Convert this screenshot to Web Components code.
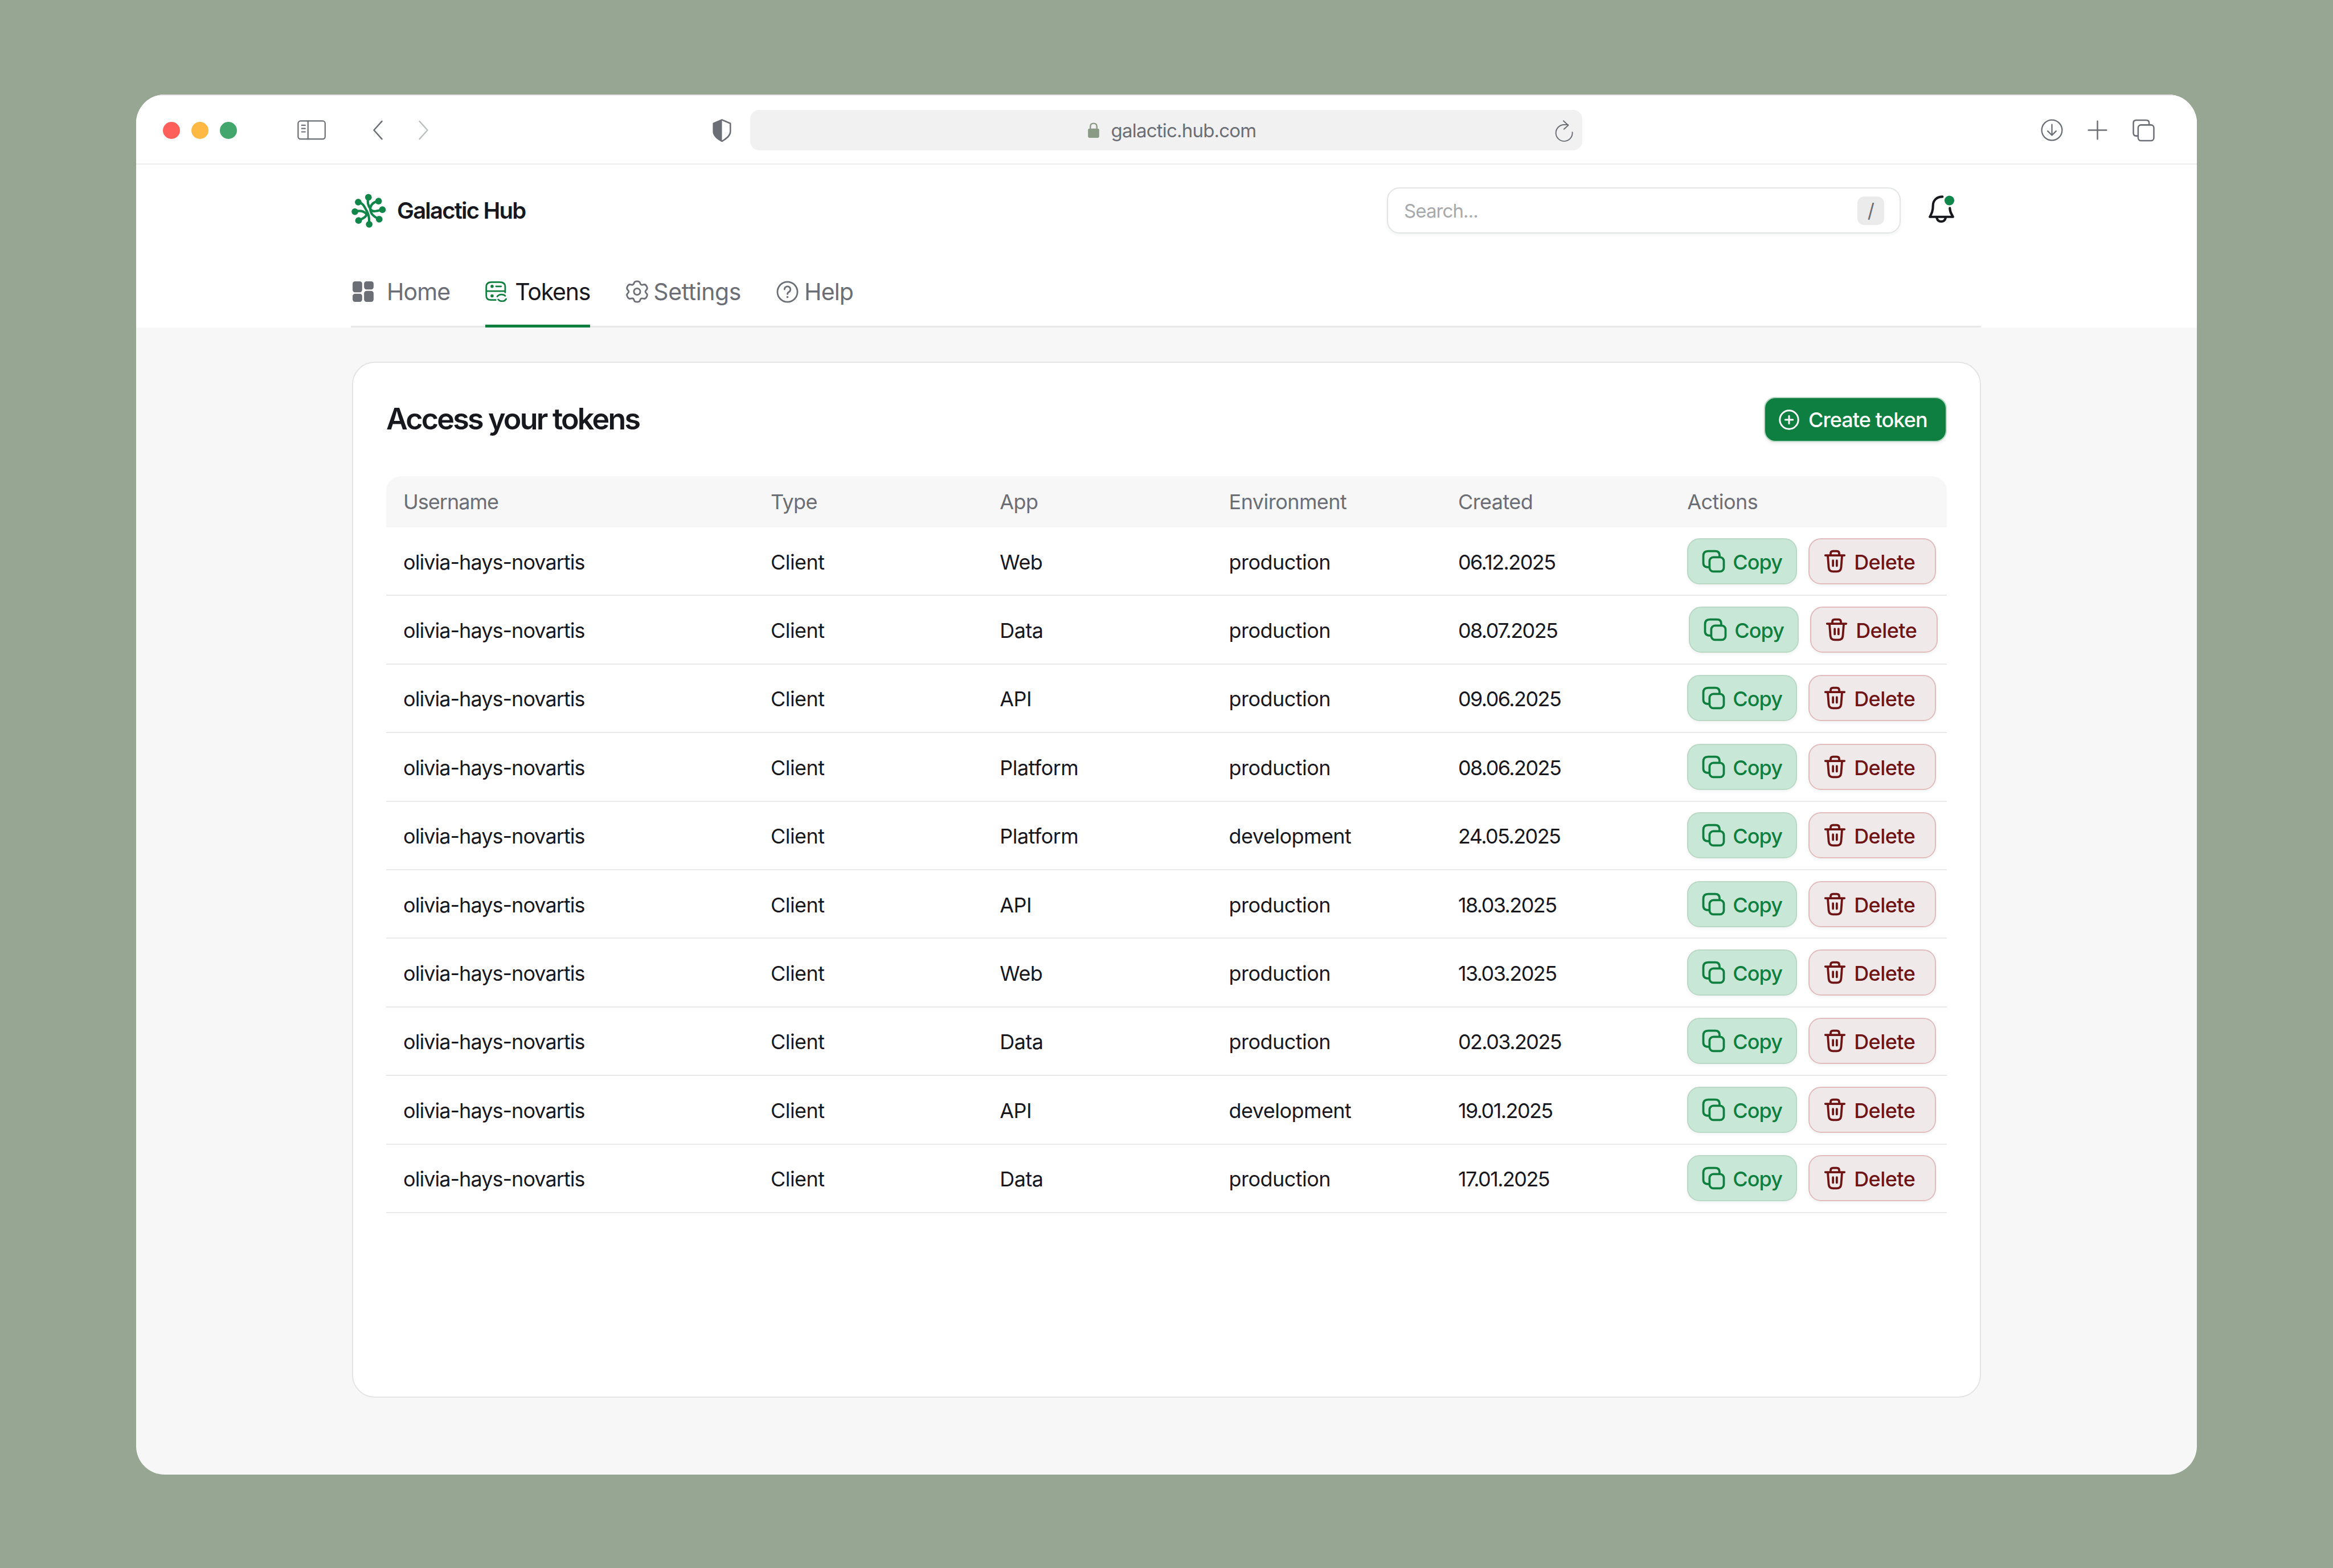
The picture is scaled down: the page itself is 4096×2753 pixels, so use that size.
<!DOCTYPE html>
<html lang="en">
<head>
<meta charset="utf-8">
<title>Galactic Hub</title>
<style>
  html, body { margin: 0; padding: 0; }
  body {
    width: 4096px;
    height: 2753px;
    overflow: hidden;
    background: #97a692;
    font-family: Inter, "Liberation Sans", sans-serif;
  }
</style>
</head>
<body>
<browser-window>
  <browser-toolbar slot="toolbar" url="galactic.hub.com"></browser-toolbar>
  <hub-header slot="header">
    <nav-tab icon="home" gap="23" style="padding-left:3px">Home</nav-tab>
    <nav-tab icon="tokens" gap="14" style="letter-spacing:-1.2px" active>Tokens</nav-tab>
    <nav-tab icon="gear" gap="8" style="letter-spacing:-0.4px">Settings</nav-tab>
    <nav-tab icon="help" gap="10">Help</nav-tab>
  </hub-header>
  <token-card heading="Access your tokens">
    <token-row head><span>Username</span><span>Type</span><span>App</span><span>Environment</span><span>Created</span><span>Actions</span></token-row>
    <token-row><span>olivia-hays-novartis</span><span>Client</span><span>Web</span><span>production</span><span>06.12.2025</span></token-row>
    <token-row shift><span>olivia-hays-novartis</span><span>Client</span><span>Data</span><span>production</span><span>08.07.2025</span></token-row>
    <token-row><span>olivia-hays-novartis</span><span>Client</span><span>API</span><span>production</span><span>09.06.2025</span></token-row>
    <token-row><span>olivia-hays-novartis</span><span>Client</span><span>Platform</span><span>production</span><span>08.06.2025</span></token-row>
    <token-row><span>olivia-hays-novartis</span><span>Client</span><span>Platform</span><span>development</span><span>24.05.2025</span></token-row>
    <token-row><span>olivia-hays-novartis</span><span>Client</span><span>API</span><span>production</span><span>18.03.2025</span></token-row>
    <token-row><span>olivia-hays-novartis</span><span>Client</span><span>Web</span><span>production</span><span>13.03.2025</span></token-row>
    <token-row><span>olivia-hays-novartis</span><span>Client</span><span>Data</span><span>production</span><span>02.03.2025</span></token-row>
    <token-row><span>olivia-hays-novartis</span><span>Client</span><span>API</span><span>development</span><span>19.01.2025</span></token-row>
    <token-row><span>olivia-hays-novartis</span><span>Client</span><span>Data</span><span>production</span><span>17.01.2025</span></token-row>
  </token-card>
</browser-window>

<script>
// icon table: viewBox, width, height, markup
const ICONS = {
  sidebar: ['70 65 185 130', 51, 36, '<g fill="none" stroke="#6b6e74" stroke-width="8" stroke-linecap="round"><rect x="75" y="70" width="172" height="115" rx="15"/><path d="M138 70V185M98 97h22M98 118h22M98 139h22"/></g>'],
  back: ['0 0 23 42', 19, 35, '<path d="M20 2 3 21l17 19" fill="none" stroke="#6b6e74" stroke-width="3" stroke-linecap="round" stroke-linejoin="round"/>'],
  forward: ['0 0 23 42', 19, 35, '<path d="M3 2l17 19L3 40" fill="none" stroke="#bcc1bf" stroke-width="3" stroke-linecap="round" stroke-linejoin="round"/>'],
  shield: ['0 0 39 47', 33, 40, '<path d="M19.5 1.5 37 9v17c0 9-9 15-17.5 20C11 41 2 35 2 26V9z" fill="none" stroke="#6b6e74" stroke-width="3" stroke-linejoin="round"/><path d="M19.5 1.5V46C11 41 2 35 2 26V9z" fill="#6b6e74"/>'],
  lock: ['0 0 24 33', 20, 27, '<rect y="13" width="24" height="20" rx="3" fill="#8b9a85"/><path d="M5 14V9q0-7 7-7t7 7v5" fill="none" stroke="#8b9a85" stroke-width="3"/>'],
  reload: ['95 90 125 140', 35, 39, '<path d="M208 170a52 52 0 1 1-53-48h26M152 98l30 28-27 24" fill="none" stroke="#6b6e74" stroke-width="7" stroke-linecap="round" stroke-linejoin="round"/>'],
  download: ['0 0 24 24', 39, 39, '<g fill="none" stroke="#6b6e74" stroke-width="1.4" stroke-linecap="round" stroke-linejoin="round"><circle cx="12" cy="12" r="11"/><path d="M12 6v11.5M7.5 13l4.5 4.5 4.5-4.5"/></g>'],
  plus: ['0 0 42 42', 35, 35, '<path d="M21 2v38M2 21h38" fill="none" stroke="#6b6e74" stroke-width="3" stroke-linecap="round"/>'],
  tabs: ['0 0 49 47', 41, 40, '<g fill="none" stroke="#6b6e74" stroke-width="3" stroke-linejoin="round"><path d="M36 11V8q0-6-6-6H9Q3 2 3 8v21q0 6 6 6h3"/><rect x="13" y="12" width="33" height="33" rx="6"/></g>'],
  logo: ['50 45 225 215', 63, 60, '<g fill="#11864a"><circle cx="160" cy="68" r="21"/><circle cx="224" cy="92" r="21"/><circle cx="248" cy="146" r="21"/><circle cx="228" cy="206" r="21"/><circle cx="165" cy="238" r="21"/><circle cx="98" cy="214" r="21"/><circle cx="75" cy="158" r="21"/><circle cx="96" cy="98" r="21"/></g><g fill="none" stroke="#11864a" stroke-width="15" stroke-linecap="round"><path d="M96 98c34 7 39 32 54 57s15 50 15 83"/><path d="M160 68c-10 32 0 57 15 77s40 7 73 1"/><path d="M224 92c-34 3-54 28-52 53 3 30 23 45 56 61"/><path d="M75 158c30-8 55-3 70 12 10 15-15 30-47 44"/></g>'],
  bell: ['80 55 170 190', 47, 53, '<path d="M168 70c-38 0-60 25-60 55 0 35-8 50-20 73h147c-13-23-20-33-20-56M132 205c8 30 48 30 56 0" fill="none" stroke="#17181e" stroke-width="15" stroke-linecap="round" stroke-linejoin="round"/><circle cx="212" cy="94" r="31" fill="#11864a"/>'],
  home: ['0 0 44 43', 37, 36, '<g fill="#6b6e74"><rect width="20" height="23" rx="5"/><rect y="26" width="20" height="17" rx="5"/><rect x="24" width="20" height="17" rx="5"/><rect x="24" y="20" width="20" height="23" rx="5"/></g>'],
  tokens: ['55 60 135 130', 38, 36, '<g fill="none" stroke="#0f7f40" stroke-width="10" stroke-linecap="round"><path d="M120 178H90q-30 0-30-28V95q0-30 35-30h50q35 0 35 30v35M60 122h120M122 92h32M130 156c10-16 40-16 50-4M186 172c-10 18-38 18-50 3"/></g><circle cx="97" cy="92" r="10" fill="#0f7f40"/><circle cx="97" cy="152" r="10" fill="#0f7f40"/>'],
  gear: ['62 40 146 150', 41, 42, '<g fill="none" stroke="#6b6e74" stroke-width="10" stroke-linejoin="round"><path d="M116 62q2-12 19-12t19 12q4 14 18 10 14-6 22 8 10 16-2 26-10 9 0 18 12 10 2 26-8 14-22 8-14-4-18 10-2 12-19 12t-19-12q-4-14-18-10-14 6-22-8-10-16 2-26 10-9 0-18-12-10-2-26 8-14 22-8 14 4 18-10z"/><circle cx="135" cy="115" r="20"/></g>'],
  help: ['0 0 24 24', 39, 39, '<g fill="none" stroke="#6b6e74" stroke-width="1.7" stroke-linecap="round"><circle cx="12" cy="12" r="10.8"/><path d="M8.8 9.3a3.2 3.2 0 1 1 4.9 2.7c-1 .6-1.7 1.2-1.7 2.4"/></g><circle cx="12" cy="17.6" r="1.1" fill="#6b6e74"/>'],
  plusCircle: ['0 0 24 24', 36, 36, '<g fill="none" stroke="#fff" stroke-width="2" stroke-linecap="round"><circle cx="12" cy="12" r="10.8"/><path d="M12 7.5v9M7.5 12h9"/></g>'],
  copy: ['0 0 49 49', 41, 41, '<g fill="none" stroke="#0f7f40" stroke-width="4.5" stroke-linecap="round"><path d="M37 15v-3q0-9-9-9H13Q3 3 3 13v15q0 9 11 9"/><rect x="16" y="16" width="30" height="30" rx="8"/></g>'],
  trash: ['0 0 44 49', 37, 41, '<g fill="none" stroke="#6f1414" stroke-width="4.5" stroke-linecap="round" stroke-linejoin="round"><path d="M2 12h40M13 11V8q0-5 5-5h8q5 0 5 5v3M7 12l2 26q1 8 9 8h8q8 0 9-8l2-26M18 23v11M26 23v11"/></g>']
};

function icon(name) {
  const [box, w, h, body] = ICONS[name];
  return `<svg viewBox="${box}" width="${w}" height="${h}" style="display:block;flex:none">${body}</svg>`;
}

class BrowserWindow extends HTMLElement {
  constructor() {
    super();
    this.attachShadow({ mode: 'open' });
    this.shadowRoot.innerHTML = `
      <style>
        :host { display: block; box-sizing: border-box; width: 3618px; height: 2423px; margin: 166px 0 0 239px; }
        .win {
          height: 100%;
          display: flex;
          flex-direction: column;
          border-radius: 50px;
          overflow: hidden;
          background: #f7f7f7;
        }
        main { flex: 1; padding: 60px 0 0 379px; }
      </style>
      <div class="win">
        <slot name="toolbar"></slot>
        <slot name="header"></slot>
        <main><slot></slot></main>
      </div>`;
  }
}

class BrowserToolbar extends HTMLElement {
  constructor() {
    super();
    this.attachShadow({ mode: 'open' });
    this.shadowRoot.innerHTML = `
      <style>
        :host { display: flex; box-sizing: border-box; height: 123px; padding: 2px 73px 0 47px; align-items: center;
          background: #fff; border-top: 2px solid #e6e6e6; border-bottom: 2px solid #eeeced; }
        .dots { display: flex; gap: 20px; }
        .dots i { width: 30px; height: 30px; border-radius: 50%; display: block; }
        .side { margin-left: 106px; }
        .back { margin-left: 81px; }
        .fwd { margin-left: 61px; }
        .shield { margin-left: 498px; }
        .url {
          margin-left: 33px;
          width: 1461px;
          height: 71px;
          background: #f1f1f1;
          border-radius: 16px;
          display: flex;
          align-items: center;
          position: relative;
          justify-content: center;
          gap: 21px;
          color: #6b6e74;
          font-size: 33px;
          letter-spacing: -0.8px;
          padding-left: 20px;
          box-sizing: border-box;
        }
        .reload { position: absolute; right: 14px; top: 17px; }
        .right { margin-left: auto; display: flex; align-items: center; gap: 43px; }
      </style>
      <div class="dots"><i style="background:#ff5f5b"></i><i style="background:#feb844"></i><i style="background:#43a76d"></i></div>
      <span class="side">${icon('sidebar')}</span>
      <span class="back">${icon('back')}</span>
      <span class="fwd">${icon('forward')}</span>
      <span class="shield">${icon('shield')}</span>
      <div class="url">${icon('lock')}<span class="host"></span><span class="reload">${icon('reload')}</span></div>
      <div class="right">${icon('download')}${icon('plus')}${icon('tabs')}</div>`;
  }
  connectedCallback() {
    this.shadowRoot.querySelector('.host').textContent = this.getAttribute('url');
  }
}

class HubHeader extends HTMLElement {
  constructor() {
    super();
    this.attachShadow({ mode: 'open' });
    this.shadowRoot.innerHTML = `
      <style>
        :host { display: block; box-sizing: border-box; height: 286px; padding: 40px 379px 0 377px; background: #fff; }
        .top { display: flex; align-items: center; height: 81px; }
        .brand { display: flex; align-items: center; gap: 18px; font-size: 40px; font-weight: 600; color: #17181e; letter-spacing: -1.8px; }
        .search {
          margin-left: auto;
          box-sizing: border-box;
          width: 902px;
          height: 81px;
          border: 2px solid #e2e5e4;
          border-radius: 22px;
          box-shadow: 0 3px 5px rgba(20, 40, 30, 0.05);
          display: flex;
          align-items: center;
          justify-content: space-between;
          padding: 0 27px 0 28px;
          font-size: 33px;
          letter-spacing: -0.9px;
          color: #a7a9ab;
        }
        .key { width: 47px; height: 50px; border-radius: 12px; background: #ebebeb; color: #6b6e74; display: flex; align-items: center; justify-content: center; font-size: 34px; }
        .bell { margin: 0 45px 0 49px; position: relative; top: -2px; }
        nav { display: flex; gap: 62px; height: 165px; box-sizing: border-box; border-bottom: 3px solid #e8e8e8; }
      </style>
      <div class="top">
        <div class="brand">${icon('logo')}<span>Galactic Hub</span></div>
        <div class="search"><span>Search...</span><span class="key">/</span></div>
        <span class="bell">${icon('bell')}</span>
      </div>
      <nav><slot></slot></nav>`;
  }
}

class NavTab extends HTMLElement {
  constructor() {
    super();
    this.attachShadow({ mode: 'open' });
  }
  connectedCallback() {
    const on = this.hasAttribute('active');
    this.shadowRoot.innerHTML = `
      <style>
        :host { display: flex; box-sizing: border-box; height: 165px; padding-top: 60px; font-size: 41px;
          letter-spacing: -0.9px; color: ${on ? '#17181e' : '#6b6e74'}; border-bottom: 5px solid ${on ? '#0f7f40' : 'transparent'}; }
        .in { display: flex; align-items: center; height: 84px; gap: ${this.getAttribute('gap')}px; }
      </style>
      <div class="in">${icon(this.getAttribute('icon'))}<slot></slot></div>`;
  }
}

class TokenCard extends HTMLElement {
  constructor() {
    super();
    this.attachShadow({ mode: 'open' });
  }
  connectedCallback() {
    this.shadowRoot.innerHTML = `
      <style>
        :host { display: block; box-sizing: border-box; width: 2860px; height: 1819px; padding: 60px 58px 0; background: #fff;
          border: 2px solid #e3e5e4; border-radius: 40px; }
        .head { display: flex; align-items: center; justify-content: space-between; height: 79px; margin-bottom: 60px; }
        h2 { margin: -3px 0 0; font-size: 52px; font-weight: 600; letter-spacing: -2.8px; color: #17181e; }
        .create {
          box-sizing: border-box;
          width: 321px;
          height: 79px;
          display: flex;
          align-items: center;
          gap: 16px;
          padding-left: 24px;
          border-radius: 20px;
          background: #0e7f40;
          border: 2px solid #b5d8c3;
          color: #fff;
          font-size: 36px;
          font-weight: 500;
          letter-spacing: -0.95px;
          box-shadow: 0 3px 5px rgba(20, 40, 30, 0.08);
        }
      </style>
      <div class="head"><h2>${this.getAttribute('heading')}</h2><div class="create">${icon('plusCircle')}<span>Create token</span></div></div>
      <slot></slot>`;
  }
}

class TokenRow extends HTMLElement {
  constructor() {
    super();
    this.attachShadow({ mode: 'open' });
  }
  connectedCallback() {
    const head = this.hasAttribute('head');
    const shift = this.hasAttribute('shift') ? 3 : 0;
    this.shadowRoot.innerHTML = `
      <style>
        :host { display: grid; box-sizing: border-box; grid-template-columns: 645px 402.3px 402.3px 402.3px 402.3px 1fr; align-items: center;
          padding-left: 30px; font-size: 36px; letter-spacing: -0.55px;
          height: ${head ? '90px' : '120.4px'};
          background: ${head ? '#f7f7f7' : '#fff'};
          color: ${head ? '#6b6e74' : '#17181e'};
          ${head ? 'border-radius: 26px 26px 0 0;' : 'border-bottom: 2px solid #e9e9e9;'} }
        ${head ? '::slotted(span:first-child) { letter-spacing: -1px; }' : `
        ::slotted(span) { padding-top: 3px; }
        ::slotted(span:first-child) { letter-spacing: -0.95px; }
        ::slotted(span:nth-child(5)) { letter-spacing: -1.6px; }`}
        .actions { display: flex; gap: 20px; margin-left: ${shift}px; }
      </style>
      <slot></slot>
      ${head ? '' : '<div class="actions"><action-button kind="copy">Copy</action-button><action-button kind="trash">Delete</action-button></div>'}`;
  }
}

class ActionButton extends HTMLElement {
  constructor() {
    super();
    this.attachShadow({ mode: 'open' });
  }
  connectedCallback() {
    const copy = this.getAttribute('kind') === 'copy';
    this.shadowRoot.innerHTML = `
      <style>
        :host { display: flex; box-sizing: border-box; align-items: center; height: 81px; border-radius: 22px; font-weight: 500;
          width: ${copy ? '193px' : '224px'}; padding-left: ${copy ? '24px' : '26px'}; gap: ${copy ? '13px' : '15px'};
          background: ${copy ? '#c9e7d6' : '#efe9e9'};
          border: 2px solid ${copy ? '#b9d8c6' : '#e2bcbc'};
          color: ${copy ? '#0f7f40' : '#6f1414'};
          letter-spacing: ${copy ? '-0.9px' : '-0.55px'};
          box-shadow: 0 3px 5px rgba(20, 40, 30, 0.05); }
        .t { padding-top: 3px; }
      </style>
      ${icon(this.getAttribute('kind'))}<span class="t"><slot></slot></span>`;
  }
}

customElements.define('browser-window', BrowserWindow);
customElements.define('browser-toolbar', BrowserToolbar);
customElements.define('hub-header', HubHeader);
customElements.define('nav-tab', NavTab);
customElements.define('token-card', TokenCard);
customElements.define('token-row', TokenRow);
customElements.define('action-button', ActionButton);
</script>
</body>
</html>
